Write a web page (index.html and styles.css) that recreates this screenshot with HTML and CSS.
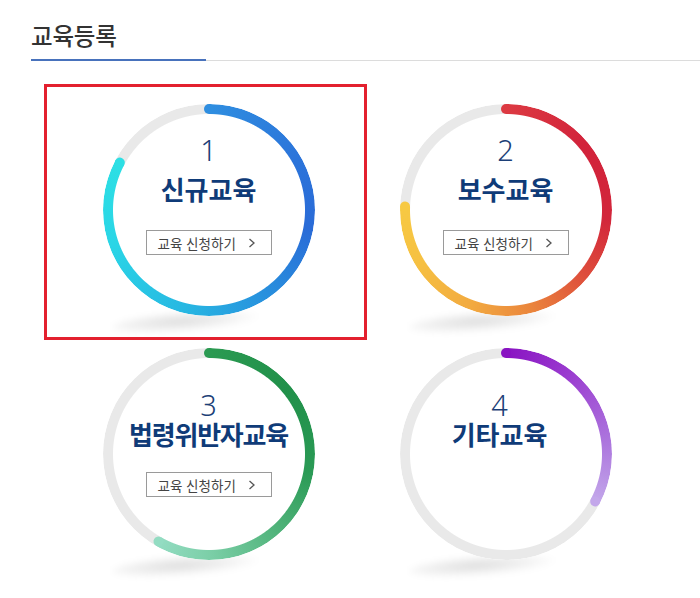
FILE: index.html
```html
<!DOCTYPE html>
<html lang="ko">
<head>
<meta charset="utf-8">
<title>교육등록</title>
<link rel="stylesheet" href="styles.css">
</head>
<body>
<div class="page">
  <div class="tabs"><h2 class="tab">교육등록</h2></div>
  <div class="grid">
    <div class="cell cell--active c1">
      <div class="shadow"></div>
      <div class="ring" style="--p:298deg">
        <span class="cap cap--start"></span>
        <span class="cap cap--end"></span>
        <div class="content">
          <span class="num">1</span>
          <strong class="name">신규교육</strong>
          <a class="btn" href="#">교육 신청하기 <svg class="chev" viewBox="0 0 8 10" width="8" height="10"><polyline points="1.5,1 6,5 1.5,9"/></svg></a>
        </div>
      </div>
    </div>
    <div class="cell c2">
      <div class="shadow"></div>
      <div class="ring" style="--p:272deg">
        <span class="cap cap--start"></span>
        <span class="cap cap--end"></span>
        <div class="content">
          <span class="num">2</span>
          <strong class="name">보수교육</strong>
          <a class="btn" href="#">교육 신청하기 <svg class="chev" viewBox="0 0 8 10" width="8" height="10"><polyline points="1.5,1 6,5 1.5,9"/></svg></a>
        </div>
      </div>
    </div>
    <div class="cell cell--low c3">
      <div class="shadow"></div>
      <div class="ring" style="--p:210deg">
        <span class="cap cap--start"></span>
        <span class="cap cap--end"></span>
        <div class="content">
          <span class="num">3</span>
          <strong class="name">법령위반자교육</strong>
          <a class="btn" href="#">교육 신청하기 <svg class="chev" viewBox="0 0 8 10" width="8" height="10"><polyline points="1.5,1 6,5 1.5,9"/></svg></a>
        </div>
      </div>
    </div>
    <div class="cell cell--low c4">
      <div class="shadow"></div>
      <div class="ring" style="--p:118deg">
        <span class="cap cap--start"></span>
        <span class="cap cap--end"></span>
        <div class="content">
          <span class="num">4</span>
          <strong class="name">기타교육</strong>
        </div>
      </div>
    </div>
  </div>
</div>
</body>
</html>
```
FILE: styles.css
```css
*, *::before, *::after { box-sizing: border-box; }
html, body { margin: 0; padding: 0; background: #fff; }
body {
  font-family: "Noto Sans CJK KR", "Noto Sans", sans-serif;
  color: #333;
  width: 700px;
  height: 598px;
  overflow: hidden;
}
.tabs {
  margin-left: 31px;
  border-bottom: 1px solid #dcdcdc;
  display: flex;
}
.tab {
  margin: 0 0 -1px 0;
  width: 175px;
  padding: 20px 0 8px 0;
  font-size: 23.5px;
  line-height: 31px;
  font-weight: 500;
  color: #333;
  letter-spacing: -0.2px;
  border-bottom: 2px solid #4872bc;
}
.grid {
  display: grid;
  grid-template-columns: 297px 297px;
  grid-auto-rows: 244px;
  margin: 28px 0 0 60px;
}
.cell {
  position: relative;
  padding-top: 15px;
}
.cell--active::after {
  content: "";
  position: absolute;
  left: -16px;
  top: -5px;
  width: 323px;
  height: 256px;
  border: 3px solid #e3202e;
  z-index: 3;
}
.shadow {
  position: absolute;
  left: 52px;
  top: 223px;
  width: 150px;
  height: 20px;
  border-radius: 50%;
  background: radial-gradient(ellipse at 45% 45%, rgba(0,0,0,0.13), rgba(0,0,0,0.05) 45%, rgba(0,0,0,0) 70%);
  filter: blur(3px);
  transform: rotate(-4deg);
  z-index: 0;
}
.ring {
  position: relative;
  z-index: 1;
  width: 212px;
  height: 212px;
  margin: 0 auto;
  border-radius: 50%;
  background: #fff;
}
.ring::before {
  content: "";
  position: absolute;
  inset: 0;
  border-radius: 50%;
  -webkit-mask: radial-gradient(farthest-side, transparent calc(100% - 10.5px), #000 calc(100% - 9.5px));
  mask: radial-gradient(farthest-side, transparent calc(100% - 10.5px), #000 calc(100% - 9.5px));
}
.cap {
  position: absolute;
  inset: 0;
  pointer-events: none;
}
.cap::after {
  content: "";
  position: absolute;
  top: 0;
  left: 50%;
  width: 10px;
  height: 10px;
  margin-left: -5px;
  border-radius: 50%;
  background: var(--cc);
}
.cap--start { transform: rotate(0deg); --cc: var(--c-start); }
.cap--end { transform: rotate(var(--p)); --cc: var(--c-end); }

.c1 .ring { --c-start: #2f8ee0; --c-end: #2ddfe4; }
.c1 .ring::before {
  background: conic-gradient(#2f8ee0 0deg, #2b74da 60deg, #2a6bd7 100deg, #2893de 150deg, #27b8e2 195deg, #2ad5e6 250deg, #2ddfe4 var(--p), #e9e9e9 var(--p));
}
.c2 .ring { --c-start: #dc3a42; --c-end: #f7c943; }
.c2 .ring::before {
  background: conic-gradient(#dc3a42 0deg, #d2233b 50deg, #d2263b 95deg, #de4e3c 130deg, #ea843c 165deg, #f2aa40 200deg, #f6c142 240deg, #f7c943 var(--p), #e9e9e9 var(--p));
}
.c3 .ring { --c-start: #2b9a52; --c-end: #93dcc2; }
.c3 .ring::before {
  background: conic-gradient(#2b9a52 0deg, #21904a 50deg, #2a9a55 100deg, #52b47c 140deg, #7ccfa8 180deg, #93dcc2 var(--p), #e9e9e9 var(--p));
}
.c4 .ring { --c-start: #8913c2; --c-end: #c3a7ea; }
.c4 .ring::before {
  background: conic-gradient(#8913c2 0deg, #9b3ed0 40deg, #ad78de 85deg, #c3a7ea var(--p), #e9e9e9 var(--p));
}

.content {
  position: relative;
  z-index: 2;
  display: flex;
  flex-direction: column;
  align-items: center;
  padding-top: 33px;
}
.num {
  font-family: "Noto Sans", "Open Sans", sans-serif;
  font-size: 29px;
  line-height: 26px;
  font-weight: 300;
  color: #1c3f77;
}
.name {
  margin-top: 13px;
  font-size: 26px;
  line-height: 26px;
  font-weight: 700;
  color: #0f3b78;
  white-space: nowrap;
}
.btn {
  margin-top: 28px;
  width: 126px;
  height: 25px;
  border: 1px solid #9a9a9a;
  display: flex;
  align-items: center;
  justify-content: flex-start;
  gap: 12px;
  padding: 0 0 0 11px;
  font-size: 13.5px;
  color: #444;
  text-decoration: none;
  white-space: nowrap;
  background: #fff;
}
.chev {
  fill: none;
  stroke: #555;
  stroke-width: 1.3;
}
.cell--low .content { padding-top: 44px; }
.cell--low .name { margin-top: 3px; }
.cell--low .btn { margin-top: 25px; }
.c3 .name { letter-spacing: -1.2px; }
.c4 .content { padding-right: 12px; }
.c4 .name { font-weight: 600; }
```
